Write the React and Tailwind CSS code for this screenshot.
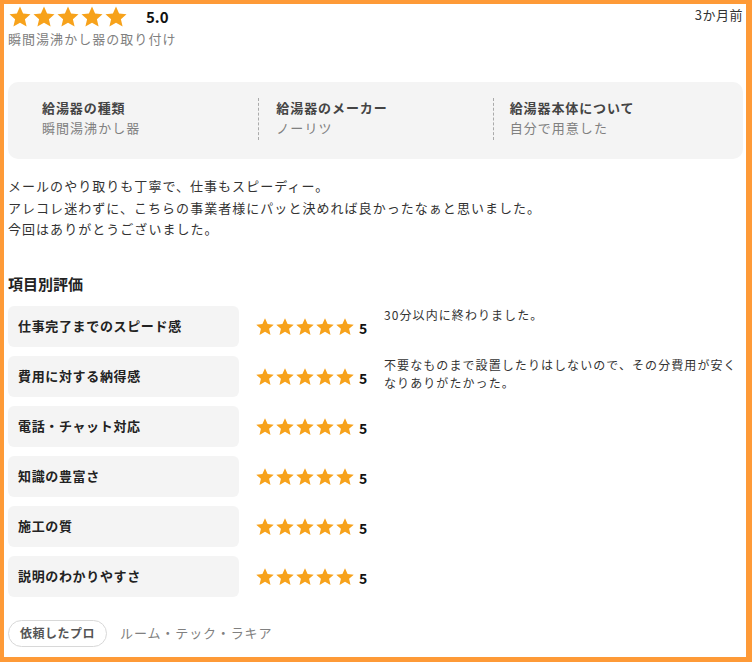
import React from "react";

const Star = ({ size = 20, className = "" }) => (
  <svg width={size} height={size} viewBox="0 0 24 24" className={className}>
    <path
      d="M12 1.6l3.1 6.9 7.4.7-5.6 5 1.7 7.4L12 17.8l-6.6 3.8 1.7-7.4-5.6-5 7.4-.7z"
      fill="#f7a21b"
    />
  </svg>
);

const Stars = ({ size, gap }) => (
  <div className={`flex items-center ${gap}`}>
    {[0, 1, 2, 3, 4].map((i) => (
      <Star key={i} size={size} />
    ))}
  </div>
);

const rows = [
  { label: "仕事完了までのスピード感", comment: "30分以内に終わりました。" },
  {
    label: "費用に対する納得感",
    comment: "不要なものまで設置したりはしないので、その分費用が安くなりありがたかった。",
  },
  { label: "電話・チャット対応", comment: "" },
  { label: "知識の豊富さ", comment: "" },
  { label: "施工の質", comment: "" },
  { label: "説明のわかりやすさ", comment: "" },
];

export default function App() {
  return (
    <div
      className="w-[752px] h-[662px] bg-white border-solid border-[#fe9a37] border-t-4 border-l-4 border-r-[6px] border-b-[5px] overflow-hidden text-[#333]"
      style={{ fontFamily: '"Noto Sans CJK JP", "Noto Sans", sans-serif' }}
    >
      <div className="pl-[4px] pr-[3px] flex flex-col">
        {/* top row */}
        <div className="flex justify-between items-start h-[25px]">
          <div className="flex items-center h-[25px]">
            <Stars size={24} gap="gap-0" />
            <span className="ml-[18px] text-[15px] font-bold leading-none text-[#111]">5.0</span>
          </div>
          <span className="text-[13px] leading-[22px] tracking-[0.04em]">3か月前</span>
        </div>
        <div className="text-[13px] leading-[20px] tracking-[0.08em] text-[#808080]">
          瞬間湯沸かし器の取り付け
        </div>

        {/* info box */}
        <div className="mt-[33px] bg-[#f4f4f4] rounded-[10px] px-4 py-[16px] grid grid-cols-3 h-[77px]">
          {[
            ["給湯器の種類", "瞬間湯沸かし器"],
            ["給湯器のメーカー", "ノーリツ"],
            ["給湯器本体について", "自分で用意した"],
          ].map(([k, v], i) => (
            <div
              key={k}
              className={`h-[42px] pb-[2px] border-l border-dashed ${i === 0 ? "border-transparent pl-[17px]" : i === 1 ? "border-[#aaa] pl-[17px]" : "border-[#aaa] pl-[16px]"}`}
            >
              <div className="text-[13px] leading-[20px] font-bold tracking-[0.07em] text-[#444]">{k}</div>
              <div className="text-[13px] leading-[20px] tracking-[0.08em] text-[#808080]">{v}</div>
            </div>
          ))}
        </div>

        {/* body */}
        <div className="mt-[16px] text-[13px] leading-[21.5px] tracking-[0.08em] text-[#333]">
          <p>メールのやり取りも丁寧で、仕事もスピーディー。</p>
          <p>アレコレ迷わずに、こちらの事業者様にパッと決めれば良かったなぁと思いました。</p>
          <p>今回はありがとうございました。</p>
        </div>

        <h2 className="mt-[33px] text-[15px] leading-[22px] font-bold text-[#222]">項目別評価</h2>

        <div className="mt-[11px] flex flex-col gap-[9px]">
          {rows.map((r) => (
            <div key={r.label} className="flex items-start h-[41px]">
              <div className="w-[231px] h-[41px] shrink-0 bg-[#f4f4f4] rounded-[6px] pl-[10px] flex items-center text-[13px] font-bold tracking-[0.05em] text-[#222]">
                {r.label}
              </div>
              <div className="ml-[16px] w-[111px] shrink-0 h-[41px] pt-[2px] flex items-center">
                <Stars size={20} gap="gap-0" />
                <span className="ml-[4px] mt-[1px] text-[14px] font-bold leading-none text-[#111]">5</span>
              </div>
              <div className="ml-[18px] flex-1 text-[12px] leading-[18px] tracking-[0.09em] text-[#333]">
                {r.comment}
              </div>
            </div>
          ))}
        </div>

        <div className="mt-[23px] flex items-center">
          <span className="h-[27px] w-[99px] flex items-center justify-center rounded-full border border-[#d8d8d8] text-[12px] font-bold text-[#555] tracking-[0.04em]">
            依頼したプロ
          </span>
          <span className="ml-[13px] text-[13px] tracking-[0.07em] text-[#808080]">ルーム・テック・ラキア</span>
        </div>
      </div>
    </div>
  );
}
